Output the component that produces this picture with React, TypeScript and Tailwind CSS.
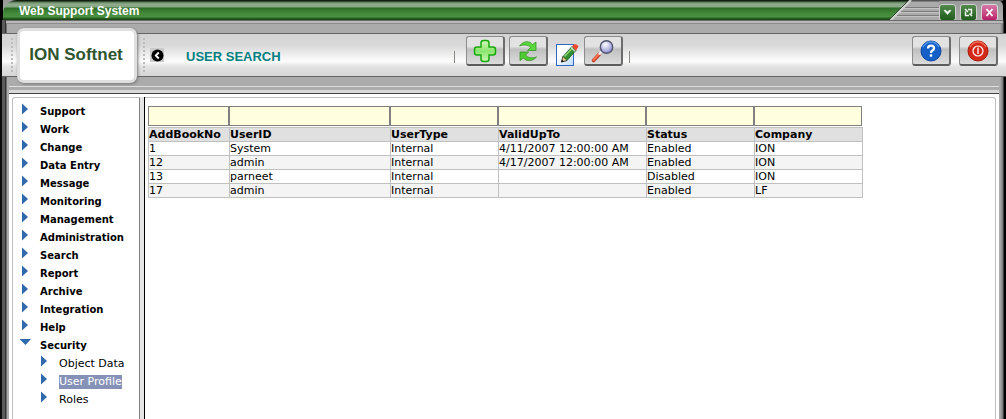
import type { ReactNode } from 'react';

const menu = [
  'Support', 'Work', 'Change', 'Data Entry', 'Message', 'Monitoring', 'Management',
  'Administration', 'Search', 'Report', 'Archive', 'Integration', 'Help',
];
const securityItems = ['Object Data', 'User Profile', 'Roles'];

const columns = [
  { name: 'AddBookNo', width: 'w-[81px]' },
  { name: 'UserID', width: 'w-[161px]' },
  { name: 'UserType', width: 'w-[108px]' },
  { name: 'ValidUpTo', width: 'w-[148px]' },
  { name: 'Status', width: 'w-[108px]' },
  { name: 'Company', width: 'w-[108px]' },
];

const rows = [
  ['1', 'System', 'Internal', '4/11/2007 12:00:00 AM', 'Enabled', 'ION'],
  ['12', 'admin', 'Internal', '4/17/2007 12:00:00 AM', 'Enabled', 'ION'],
  ['13', 'parneet', 'Internal', '', 'Disabled', 'ION'],
  ['17', 'admin', 'Internal', '', 'Enabled', 'LF'],
];

function Arrow() {
  return (
    <svg className="h-3 w-3 shrink-0" viewBox="0 0 12 12" aria-hidden="true">
      <path d="M2 0.5 L8 6 L2 11.5Z" fill="#3169ad" />
    </svg>
  );
}

function ArrowDown() {
  return (
    <svg className="h-3 w-3 shrink-0" viewBox="0 0 12 12" aria-hidden="true">
      <path d="M-0.5 2 H11 L5.5 8Z" fill="#3169ad" />
    </svg>
  );
}

function ToolButton({ label, children }: { label: string; children: ReactNode }) {
  return (
    <button
      type="button"
      aria-label={label}
      className="flex h-[30px] w-[39px] shrink-0 items-center justify-center rounded-[3px] border border-b-2 border-r-2 border-[#8c8c8c] border-b-[#5c5c5c] border-r-[#6c6c6c] bg-linear-to-b from-[#e2e2e2] from-35% via-[#c0c0c0] via-45% to-[#dcdcdc]"
    >
      {children}
    </button>
  );
}

function WindowButton({ label, close, children }: { label: string; close?: boolean; children: ReactNode }) {
  return (
    <button
      type="button"
      aria-label={label}
      className={
        close
          ? 'flex h-[17px] w-[17px] items-center justify-center rounded-[3px] border border-[#d8d8d8] bg-linear-to-b from-[#d578a8] to-[#b91868]'
          : 'flex h-[17px] w-[17px] items-center justify-center rounded-[3px] border border-[#d0d0d0] bg-linear-to-b from-[#528a4d] to-[#1f5c1a]'
      }
    >
      <svg className="h-[13px] w-[13px] shrink-0" viewBox="0 0 13 13" aria-hidden="true">{children}</svg>
    </button>
  );
}

function Grip() {
  return (
    <svg className="h-9 w-1 shrink-0" viewBox="0 0 4 36" aria-hidden="true">
      <path d="M2 1V36" stroke="#bcbcbc" strokeWidth="2" strokeDasharray="2 2" />
    </svg>
  );
}

function TitleBar() {
  return (
    <div className="ml-[3px] mr-[3px] flex h-5 rounded-tr-md bg-linear-to-b from-[#999] to-[#b0b0b0]">
      <div className="flex min-w-0 grow items-start rounded-tl-[14px] bg-[linear-gradient(to_bottom,#10200e_0px,#10200e_1px,#5b7a58_2px,#8fac8c_4px,#87a884_7px,#2c6c27_8px,#43893a_13px,#4a9040_17px,#2b6825_18px,#143c10_20px)] bg-black pl-4">
        <h1 className="pt-[3px] font-['Liberation_Sans',Arial,sans-serif] text-[12px] font-bold leading-4 text-white">Web Support System</h1>
      </div>
      <svg className="h-5 w-[50px] shrink-0" viewBox="0 0 50 20" aria-hidden="true">
        <defs>
          <linearGradient id="titleGreen" gradientUnits="userSpaceOnUse" x1="0" y1="0" x2="0" y2="20">
            <stop offset=".05" stopColor="#10200e" />
            <stop offset=".1" stopColor="#5b7a58" />
            <stop offset=".2" stopColor="#8fac8c" />
            <stop offset=".35" stopColor="#87a884" />
            <stop offset=".4" stopColor="#2c6c27" />
            <stop offset=".65" stopColor="#43893a" />
            <stop offset=".85" stopColor="#4a9040" />
            <stop offset=".9" stopColor="#2b6825" />
            <stop offset="1" stopColor="#143c10" />
          </linearGradient>
        </defs>
        <rect width="50" height="20" fill="#aaa" />
        <path d="M0 0H20L0 20Z" fill="url(#titleGreen)" />
        <path d="M20 0H50V1.500H18.500Z" fill="#555" />
        <path d="M16 7.500H50M12 11.500H50M8 15.500H50" stroke="#7c7c7c" />
        <path d="M15 8.500H50M11 12.500H50M7 16.500H50" stroke="#c4c4c4" />
        <path d="M0 20L20 0" stroke="#2f3f2d" />
        <path d="M2 20L22 0" stroke="#d4d4d4" strokeWidth="2" />
      </svg>
      <div className="flex shrink-0 gap-1 border-t border-[#555] pr-[5px] pt-[3px]">
        <WindowButton label="Minimize">
          <path d="M3 4.500L4.500 4L6.500 6L8.500 4L10 4.500L6.500 8.500Z" fill="#fff" stroke="#e8f3e7" strokeWidth=".6" />
        </WindowButton>
        <WindowButton label="Restore">
          <path d="M6 3.500H9.500V8" stroke="#f2f7f1" strokeWidth="1.400" fill="none" />
          <path d="M3.500 5.500V9.500H7" stroke="#f2f7f1" strokeWidth="1.400" fill="none" />
          <path d="M3 3L6 6M7.500 7.500L10 10" stroke="#f2f7f1" strokeWidth="1.600" />
        </WindowButton>
        <WindowButton label="Close" close>
          <path d="M3.500 3L9.500 10M9.500 3L3.500 10" stroke="#fff" strokeWidth="1.800" fill="none" />
        </WindowButton>
      </div>
    </div>
  );
}

function Toolbar() {
  return (
    <header className="flex h-11 items-center border-y border-[#666] bg-[linear-gradient(to_bottom,#d3d3d3_0%,#d9d9d9_28%,#efefef_50%,#fcfcfc_65%,#e2e2e2_78%,#d6d6d6_100%)]">
      <div className="flex min-w-0 shrink grow-0 basis-[452px] items-center">
        <div className="flex w-[15px] shrink-0 justify-center pl-1"><Grip /></div>
        <div className="-my-2 flex h-[55px] w-[120px] shrink-0 items-center justify-center rounded-[7px] border-[3px] border-[#dfdfdf] bg-white pr-0.5 font-['Liberation_Sans',Arial,sans-serif] text-[17px] font-bold text-[#2f552f] shadow-[1px_1px_3px_#777]">
          ION Softnet
        </div>
        <div className="ml-[5px]"><Grip /></div>
        <button type="button" aria-label="Back" className="ml-1 flex h-[14px] w-[14px] shrink-0 items-center justify-center bg-[#cbcbcb]">
          <svg className="h-[13px] w-[13px]" viewBox="0 0 13 13" aria-hidden="true">
            <circle cx="6.500" cy="6.500" r="6" fill="#000" />
            <path d="M7.800 3.500L4.800 6.500L7.800 9.500" stroke="#fff" strokeWidth="1.800" fill="none" />
          </svg>
        </button>
        <h2 className="ml-[22px] whitespace-nowrap pt-1 font-['Liberation_Sans',Arial,sans-serif] text-[13px] font-bold leading-4 text-[#008080]">USER SEARCH</h2>
      </div>
      <div className="flex shrink-0 items-center pb-2">
        <div className="mt-3 h-3 w-px bg-[#8a8a80]" />
        <div className="ml-[11px] flex items-center gap-1">
          <ToolButton label="Add">
            <svg className="h-6 w-6" viewBox="0 0 24 24" aria-hidden="true">
              <defs>
                <linearGradient id="plus" x1="0" y1="0" x2="0" y2="1">
                  <stop offset="0" stopColor="#d4f8b8" />
                  <stop offset=".5" stopColor="#8be56f" />
                  <stop offset="1" stopColor="#c8f8b0" />
                </linearGradient>
              </defs>
              <path d="M10.500 1.500H13.500Q16 1.500 16 4V8H20Q22.500 8 22.500 10.500V13.500Q22.500 16 20 16H16V20Q16 22.500 13.500 22.500H10.500Q8 22.500 8 20V16H4Q1.500 16 1.500 13.500V10.500Q1.500 8 4 8H8V4Q8 1.500 10.500 1.500Z" fill="url(#plus)" stroke="#17a80c" strokeWidth="1.500" />
            </svg>
          </ToolButton>
          <ToolButton label="Refresh">
            <svg className="h-5 w-5" viewBox="0 0 20 20" aria-hidden="true">
              <path d="M1.500 5C6 -1 12 0 14.500 3.500L18 1V9.500H9.500L12.500 6.500C10 3.500 6 3.500 1.500 5Z" fill="#5ad83e" stroke="#379426" strokeWidth=".8" />
              <path d="M18.500 16C14 21 8 20.500 5.500 17L2 19.500V11H10.500L7.500 14C10 17 14 17.500 18.500 16Z" fill="#4ecb34" stroke="#379426" strokeWidth=".8" />
            </svg>
          </ToolButton>
        </div>
        <button type="button" aria-label="Edit" className="ml-[7px] mt-2 h-6 w-6 shrink-0">
          <svg className="h-6 w-6" viewBox="0 0 24 24" aria-hidden="true">
            <defs>
              <linearGradient id="paper" x1="0" y1="0" x2="1" y2="1">
                <stop offset=".3" stopColor="#fff" />
                <stop offset="1" stopColor="#bcdcff" />
              </linearGradient>
            </defs>
            <rect x="1.500" y="1.500" width="17" height="21" fill="url(#paper)" stroke="#3166c4" />
            <path d="M6.500 19L8 13.500L17 3.500L21 7.500L12 17.500Z" fill="#2f8f2b" stroke="#284a20" strokeWidth=".7" />
            <path d="M9.500 13.500L18 4.500" stroke="#8bd773" strokeWidth="1.500" />
            <path d="M6.500 19L8 13.500L12 17.500Z" fill="#f0cf8c" stroke="#222" strokeWidth=".6" />
            <path d="M6.200 19.300L7 16.500L9 18.500Z" fill="#111" />
            <path d="M17 3.500L19 1.300Q22 .5 23.500 3.500L21 7.500Z" fill="#f04a2c" />
            <path d="M16.200 4.500L20 8.300" stroke="#ddd" strokeWidth="1.200" />
          </svg>
        </button>
        <div className="ml-[5px] flex items-center">
          <ToolButton label="Find">
            <svg className="h-6 w-6" viewBox="0 0 24 24" aria-hidden="true">
              <defs>
                <radialGradient id="lens" cx=".4" cy=".3" r=".7">
                  <stop offset="0" stopColor="#fff" />
                  <stop offset="1" stopColor="#8b8fd4" />
                </radialGradient>
              </defs>
              <path d="M2.500 21.500L8.500 15" stroke="#b93418" strokeWidth="3.500" strokeLinecap="round" />
              <path d="M2.500 21L8.500 14.500" stroke="#ff7354" strokeWidth="2" strokeLinecap="round" />
              <path d="M8 15.500L10.500 12.500" stroke="#eee" strokeWidth="2.500" />
              <circle cx="15.500" cy="8" r="6.200" fill="url(#lens)" stroke="#50546c" strokeWidth="1.400" />
            </svg>
          </ToolButton>
        </div>
        <div className="ml-[6px] mt-3 h-3 w-px bg-[#8a8a80]" />
      </div>
      <div className="ml-auto flex shrink-0 gap-2 pb-2 pr-2">
        <ToolButton label="Help">
          <svg className="h-[22px] w-[22px]" viewBox="0 0 22 22" aria-hidden="true">
            <circle cx="11" cy="11" r="10" fill="#145fc8" stroke="#0a459e" />
            <path d="M3 7Q6 2 11 2T19 7" stroke="#4d94e8" strokeWidth="1.500" fill="none" />
            <path d="M8 8.500Q8 5.700 11 5.700T14 8.300Q14 9.800 12.300 10.600Q11 11.300 11 13" fill="none" stroke="#fff" strokeWidth="2.300" />
            <rect x="9.800" y="14.300" width="2.400" height="2.400" fill="#fff" />
          </svg>
        </ToolButton>
        <ToolButton label="Log out">
          <svg className="h-[22px] w-[22px]" viewBox="0 0 22 22" aria-hidden="true">
            <circle cx="11" cy="11" r="10" fill="#d52a18" stroke="#a91808" />
            <path d="M3 7Q6 2 11 2T19 7" stroke="#ef6c58" strokeWidth="1.500" fill="none" />
            <circle cx="11" cy="11" r="5" fill="none" stroke="#fff" strokeWidth="1.200" />
            <path d="M11 7.500V14" stroke="#fff" strokeWidth="1.300" />
          </svg>
        </ToolButton>
      </div>
    </header>
  );
}

function Sidebar() {
  return (
    <nav className="w-[128px] shrink-0 rounded-tl-[3px] border-x border-t border-[#c0c0c0] border-r-[#808080] pt-[5px] font-['DejaVu_Sans',Verdana,sans-serif] text-[11px] leading-[18px] text-black">
      <ul>
        {menu.map((item) => (
          <li key={item} className="flex h-[18px] items-start pl-[7px]">
            <Arrow />
            <a href="#" className="ml-2 text-[10px] font-bold">{item}</a>
          </li>
        ))}
        <li>
          <div className="flex h-[18px] items-start pl-[7px]">
            <ArrowDown />
            <a href="#" className="ml-2 text-[10px] font-bold">Security</a>
          </div>
          <ul>
            {securityItems.map((item) => (
              <li key={item} className="flex h-[18px] items-start pl-[26px]">
                <Arrow />
                <a
                  href="#"
                  className={
                    item === 'User Profile'
                      ? 'ml-2 mt-0.5 whitespace-nowrap bg-[#8691b8] leading-[14px] text-white'
                      : 'ml-2 mt-0.5 whitespace-nowrap leading-[14px]'
                  }
                >
                  {item}
                </a>
              </li>
            ))}
          </ul>
        </li>
      </ul>
    </nav>
  );
}

function UserTable() {
  return (
    <div className="grow rounded-tr-[3px] border-r border-t border-[#c0c0c0] pl-[3px] pt-2 font-['DejaVu_Sans',Verdana,sans-serif] text-[11px] text-black">
      <div className="flex">
        {columns.map((c) => (
          <input key={c.name} aria-label={`Filter ${c.name}`} className={`${c.width} h-5 shrink-0 border border-[#808080] bg-[#ffffe0] px-1 outline-none`} />
        ))}
      </div>
      <table className="mt-px w-[715px] table-fixed border-collapse text-left leading-[12px]">
        <thead>
          <tr className="bg-[#e0e0e0]">
            {columns.map((c) => (
              <th key={c.name} scope="col" className={`${c.width} h-[14px] whitespace-nowrap border border-[#c0c0c0] p-0 pt-px font-bold`}>{c.name}</th>
            ))}
          </tr>
        </thead>
        <tbody>
          {rows.map((row) => (
            <tr key={row[0]} className="even:bg-[#f4f4f4]">
              {row.map((cell, i) => (
                <td key={i} className="h-[14px] whitespace-nowrap border border-[#c0c0c0] p-0 pt-px">{cell}</td>
              ))}
            </tr>
          ))}
        </tbody>
      </table>
    </div>
  );
}

export default function App() {
  return (
    <div className="flex min-h-screen flex-col bg-black">
      <TitleBar />
      <div className="flex grow flex-col border-l-2 border-[#0a0a0a] bg-[linear-gradient(to_right,#5a5a5a_0px,#5a5a5a_3px,#333_3px,#333_4px,#ababab_5px,#ababab_calc(100%-6px),#777_calc(100%-3px),#000_calc(100%-2px))]">
        <div className="ml-1 mr-[3px] h-[13px] border-t border-[#6a6a6a] bg-[linear-gradient(to_bottom,#b8b8b8_2px,#8c8c8c_2px,#8c8c8c_3px,transparent_3px)]" />
        <Toolbar />
        <div className="ml-[7px] mr-[7px] flex h-[17px] flex-col border-b border-[#444]">
          <div className="h-[10px] border-b border-[#dcdcdc]" />
          <div className="h-[3px]" />
          <div className="h-[3px] bg-[#d8d8d8]" />
        </div>
        <main className="mx-[7px] flex grow bg-white pl-[3px] pr-[3px] pt-[3px]">
          <Sidebar />
          <div className="w-[5px] shrink-0 border-r border-black bg-[#e6e6e6]" />
          <UserTable />
        </main>
      </div>
    </div>
  );
}
